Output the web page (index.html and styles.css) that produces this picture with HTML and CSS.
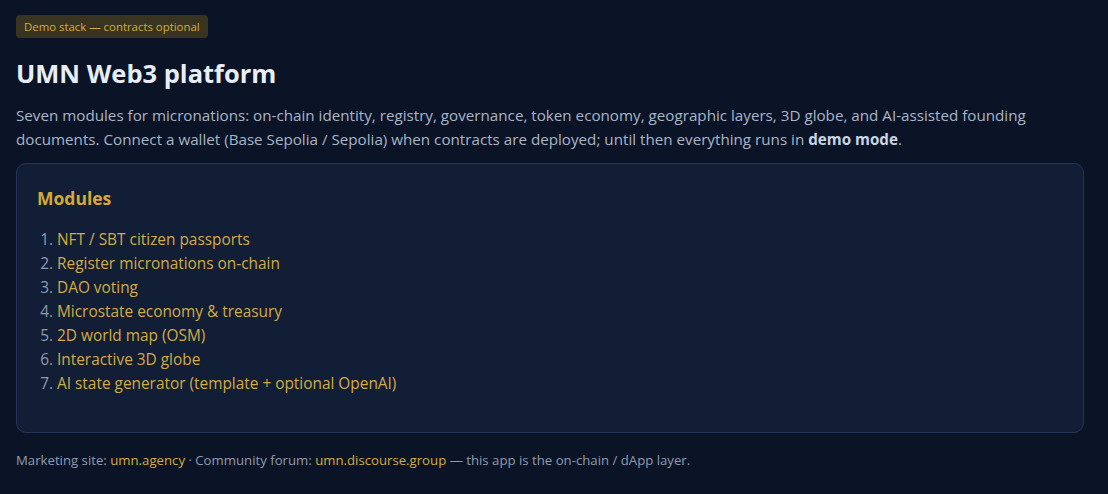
FILE: index.html
```html
<!DOCTYPE html>
<html lang="en">
<head>
<meta charset="utf-8">
<title>UMN Web3 platform</title>
<link rel="stylesheet" href="styles.css">
</head>
<body>
<main class="page">
  <span class="badge">Demo stack — contracts optional</span>
  <h1 class="title">UMN Web3 platform</h1>
  <p class="lead">Seven modules for micronations: on-chain identity, registry, governance, token economy, geographic layers, 3D globe, and AI-assisted founding documents. Connect a wallet (Base Sepolia / Sepolia) when contracts are deployed; until then everything runs in <strong>demo mode</strong>.</p>
  <section class="card">
    <h2 class="card-title">Modules</h2>
    <ol class="modules">
      <li><a href="#">NFT / SBT citizen passports</a></li>
      <li><a href="#">Register micronations on-chain</a></li>
      <li><a href="#">DAO voting</a></li>
      <li><a href="#">Microstate economy &amp; treasury</a></li>
      <li><a href="#">2D world map (OSM)</a></li>
      <li><a href="#">Interactive 3D globe</a></li>
      <li><a href="#">AI state generator (template + optional OpenAI)</a></li>
    </ol>
  </section>
  <p class="footer">Marketing site: <a href="#">umn.agency</a> · Community forum: <a href="#">umn.discourse.group</a> — this app is the on-chain / dApp layer.</p>
</main>
</body>
</html>
```
FILE: styles.css
```css
html, body {
  margin: 0;
  padding: 0;
  background: #0b1426;
}
body {
  font-family: "Open Sans", "Noto Sans", "Liberation Sans", sans-serif;
  color: #a9b5c7;
}
.page {
  padding: 15px 24px 16px 16px;
  display: flex;
  flex-direction: column;
  align-items: flex-start;
}
.badge {
  display: inline-block;
  background: #38341f;
  color: #cfae45;
  font-size: 11.4px;
  line-height: 23px;
  padding: 0 8px;
  border-radius: 4px;
}
.title {
  margin: 19px 0 0;
  font-size: 25.5px;
  line-height: 32px;
  font-weight: 700;
  color: #e8eef8;
}
.lead {
  margin: 14px 0 0;
  font-size: 15.2px;
  line-height: 24px;
}
.lead strong {
  color: #c9d4e4;
}
.card {
  align-self: stretch;
  margin-top: 12px;
  background: #111e36;
  border: 1px solid #23365a;
  border-radius: 10px;
  padding: 20px 20px 36px;
}
.card-title {
  margin: 2px 0 0;
  font-size: 17.5px;
  line-height: 24px;
  font-weight: 700;
  color: #d6a935;
}
.modules {
  margin: 18px 0 0;
  padding-left: 20px;
  font-size: 15.4px;
  line-height: 24px;
  color: #8e9bb0;
}
.modules a, .footer a {
  color: #d4ab45;
  text-decoration: none;
}
.footer {
  margin: 18px 0 0;
  font-size: 13.2px;
  line-height: 18px;
  color: #8e9bb0;
}
```
